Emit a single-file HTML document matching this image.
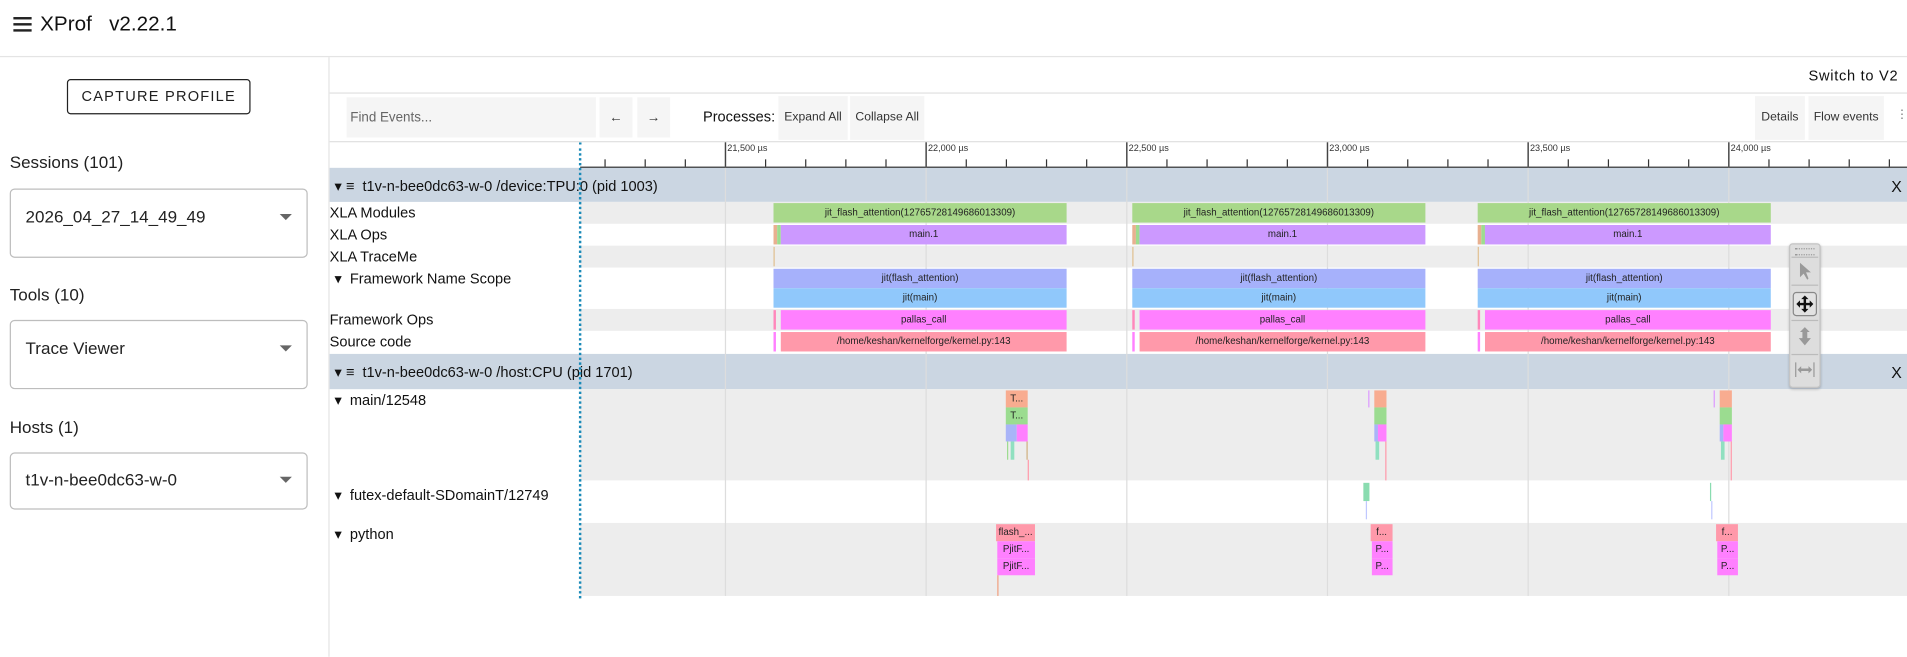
<!DOCTYPE html>
<html><head><meta charset="utf-8"><style>
html,body{margin:0;padding:0;width:1907px;height:657px;overflow:hidden;background:#fff}
#s{position:absolute;left:0;top:0;width:1568px;height:540px;transform:scale(1.21620);transform-origin:0 0;font-family:"Liberation Sans",Arial,sans-serif;color:#202020}
.a{position:absolute}
.t{font-size:12px;white-space:nowrap}
.bar{position:absolute;font-size:8px;text-align:center;line-height:16px;overflow:hidden;white-space:nowrap;color:#222}
.btn{position:absolute;background:#f5f5f5;font-size:11px;line-height:34px;text-align:center;color:#333}
.sel{position:absolute;left:8px;width:243px;border:1px solid #bdbdbd;border-radius:4px;font-size:14px;color:#222}
.sel span{position:absolute;left:12px;top:14px}
.sel i{position:absolute;right:12px;top:20px;border-left:5px solid transparent;border-right:5px solid transparent;border-top:5px solid #666}
.grid{position:absolute;width:1px;background:#ddd}
.lbl{position:absolute;font-size:12px;white-space:nowrap;color:#111}
</style></head><body><div id="s">
<div class="a" style="left:11px;top:14px;width:15px;height:2px;background:#222"></div>
<div class="a" style="left:11px;top:19px;width:15px;height:2px;background:#222"></div>
<div class="a" style="left:11px;top:24px;width:15px;height:2px;background:#222"></div>
<div class="a" style="left:33px;top:10px;font-size:17px;color:#111">XProf&nbsp;&nbsp; v2.22.1</div>
<div class="a" style="left:0;top:46px;width:1568px;height:1px;background:#e4e4e4"></div>
<div class="a" style="left:270px;top:47px;width:1px;height:493px;background:#e4e4e4"></div>
<div class="a" style="left:55px;top:65px;width:149px;height:27px;border:1px solid #222;border-radius:3px;font-size:12px;letter-spacing:1px;text-align:center;line-height:27px">CAPTURE PROFILE</div>
<div class="a" style="left:8px;top:125px;font-size:14px">Sessions (101)</div>
<div class="sel" style="top:155px;height:55px"><span>2026_04_27_14_49_49</span><i></i></div>
<div class="a" style="left:8px;top:234px;font-size:14px">Tools (10)</div>
<div class="sel" style="top:263px;height:55px"><span>Trace Viewer</span><i></i></div>
<div class="a" style="left:8px;top:343px;font-size:14px">Hosts (1)</div>
<div class="sel" style="top:372px;height:45px"><span style="top:13px">t1v-n-bee0dc63-w-0</span><i style="top:19px"></i></div>
<div class="a" style="left:1487px;top:55px;font-size:12px;letter-spacing:.6px;color:#111">Switch to V2</div>
<div class="a" style="left:271px;top:76px;width:1297px;height:1px;background:#e0e0e0"></div>
<div class="a" style="left:285px;top:80px;width:205px;height:33px;background:#f5f5f5"></div>
<div class="a" style="left:288px;top:91px;font-size:11px;color:#666">Find Events...</div>
<div class="btn" style="left:493px;top:80px;width:27px;height:33px">←</div>
<div class="btn" style="left:524px;top:80px;width:27px;height:33px">→</div>
<div class="a" style="left:578px;top:89px;font-size:12px;color:#111">Processes:</div>
<div class="btn" style="left:640px;top:79px;width:57px;height:36px;line-height:36px;font-size:10px">Expand All</div>
<div class="btn" style="left:699px;top:79px;width:61px;height:36px;line-height:36px;font-size:10px">Collapse All</div>
<div class="btn" style="left:1443px;top:79px;width:41px;height:36px;line-height:36px;font-size:10px">Details</div>
<div class="btn" style="left:1487px;top:79px;width:62px;height:36px;line-height:36px;font-size:10px">Flow events</div>
<div class="a" style="left:1559px;top:89px;font-size:10px;color:#777">⋮</div>
<div class="a" style="left:271px;top:116px;width:1297px;height:1px;background:#e0e0e0"></div>
<svg class="a" style="left:0;top:0" width="1568" height="540">
<line x1="477" y1="137.5" x2="1568" y2="137.5" stroke="#222" stroke-width="1"/>
<g stroke="#333" stroke-width="1">
<line x1="497.5" y1="131" x2="497.5" y2="137"/><line x1="530.5" y1="131" x2="530.5" y2="137"/><line x1="563.5" y1="131" x2="563.5" y2="137"/>
<line x1="629.5" y1="131" x2="629.5" y2="137"/><line x1="662.5" y1="131" x2="662.5" y2="137"/><line x1="695.5" y1="131" x2="695.5" y2="137"/><line x1="728.5" y1="131" x2="728.5" y2="137"/>
<line x1="794.5" y1="131" x2="794.5" y2="137"/><line x1="827.5" y1="131" x2="827.5" y2="137"/><line x1="860.5" y1="131" x2="860.5" y2="137"/><line x1="893.5" y1="131" x2="893.5" y2="137"/>
<line x1="959.5" y1="131" x2="959.5" y2="137"/><line x1="992.5" y1="131" x2="992.5" y2="137"/><line x1="1025.5" y1="131" x2="1025.5" y2="137"/><line x1="1058.5" y1="131" x2="1058.5" y2="137"/>
<line x1="1124.5" y1="131" x2="1124.5" y2="137"/><line x1="1157.5" y1="131" x2="1157.5" y2="137"/><line x1="1190.5" y1="131" x2="1190.5" y2="137"/><line x1="1223.5" y1="131" x2="1223.5" y2="137"/>
<line x1="1289.5" y1="131" x2="1289.5" y2="137"/><line x1="1322.5" y1="131" x2="1322.5" y2="137"/><line x1="1355.5" y1="131" x2="1355.5" y2="137"/><line x1="1388.5" y1="131" x2="1388.5" y2="137"/>
<line x1="1454.5" y1="131" x2="1454.5" y2="137"/><line x1="1487.5" y1="131" x2="1487.5" y2="137"/><line x1="1520.5" y1="131" x2="1520.5" y2="137"/><line x1="1553.5" y1="131" x2="1553.5" y2="137"/>
</g>
<g stroke="#444" stroke-width="1.2">
<line x1="596.5" y1="117" x2="596.5" y2="137"/><line x1="761.5" y1="117" x2="761.5" y2="137"/><line x1="926.5" y1="117" x2="926.5" y2="137"/><line x1="1091.5" y1="117" x2="1091.5" y2="137"/><line x1="1256.5" y1="117" x2="1256.5" y2="137"/><line x1="1421.5" y1="117" x2="1421.5" y2="137"/>
</g>
<g font-family="Liberation Sans, Arial, sans-serif" font-size="7.5" fill="#333">
<text x="598" y="124">21,500 µs</text><text x="763" y="124">22,000 µs</text><text x="928" y="124">22,500 µs</text><text x="1093" y="124">23,000 µs</text><text x="1258" y="124">23,500 µs</text><text x="1423" y="124">24,000 µs</text>
</g>
</svg>
<div class="a" style="left:271px;top:138px;width:1297px;height:28px;background:#cbd6e2"></div>
<div class="lbl" style="left:275px;top:146px">▾ ≡&nbsp; t1v-n-bee0dc63-w-0 /device:TPU:0 (pid 1003)</div>
<div class="lbl" style="left:1555px;top:146px;font-size:13px">X</div>
<div class="a" style="left:477px;top:166px;width:1091px;height:18px;background:#ededed"></div>
<div class="a" style="left:477px;top:202px;width:1091px;height:18px;background:#ededed"></div>
<div class="a" style="left:477px;top:254px;width:1091px;height:18px;background:#ededed"></div>
<div class="lbl" style="left:271px;top:168px">XLA Modules</div>
<div class="lbl" style="left:271px;top:186px">XLA Ops</div>
<div class="lbl" style="left:271px;top:204px">XLA TraceMe</div>
<div class="lbl" style="left:275px;top:222px">▾&nbsp; Framework Name Scope</div>
<div class="lbl" style="left:271px;top:256px">Framework Ops</div>
<div class="lbl" style="left:271px;top:274px">Source code</div>
<div class="a" style="left:271px;top:291px;width:1297px;height:29px;background:#cbd6e2"></div>
<div class="lbl" style="left:275px;top:299px">▾ ≡&nbsp; t1v-n-bee0dc63-w-0 /host:CPU (pid 1701)</div>
<div class="lbl" style="left:1555px;top:299px;font-size:13px">X</div>
<div class="a" style="left:477px;top:320px;width:1091px;height:75px;background:#ededed"></div>
<div class="a" style="left:477px;top:430px;width:1091px;height:60px;background:#ededed"></div>
<div class="lbl" style="left:275px;top:322px">▾&nbsp; main/12548</div>
<div class="lbl" style="left:275px;top:400px">▾&nbsp; futex-default-SDomainT/12749</div>
<div class="lbl" style="left:275px;top:432px">▾&nbsp; python</div>
<div class="grid" style="left:596px;top:138px;height:352px"></div>
<div class="grid" style="left:761px;top:138px;height:352px"></div>
<div class="grid" style="left:926px;top:138px;height:352px"></div>
<div class="grid" style="left:1091px;top:138px;height:352px"></div>
<div class="grid" style="left:1256px;top:138px;height:352px"></div>
<div class="grid" style="left:1421px;top:138px;height:352px"></div>
<div class="bar" style="left:636px;top:167px;width:241px;height:16px;background:#a8d88a">jit_flash_attention(12765728149686013309)</div>
<div class="bar" style="left:636px;top:185px;width:3px;height:16px;background:#e8b090"></div>
<div class="bar" style="left:639px;top:185px;width:3px;height:16px;background:#9ddc90"></div>
<div class="bar" style="left:642px;top:185px;width:235px;height:16px;background:#cc99ff">main.1</div>
<div class="bar" style="left:636px;top:203px;width:1px;height:16px;background:#e0c090"></div>
<div class="bar" style="left:636px;top:221px;width:241px;height:16px;background:#a6b1fb">jit(flash_attention)</div>
<div class="bar" style="left:636px;top:237px;width:241px;height:16px;background:#90c8fb">jit(main)</div>
<div class="bar" style="left:636px;top:255px;width:2px;height:16px;background:#ff88bb"></div>
<div class="bar" style="left:642px;top:255px;width:235px;height:16px;background:#ff80ff">pallas_call</div>
<div class="bar" style="left:636px;top:273px;width:2px;height:16px;background:#ff80ff"></div>
<div class="bar" style="left:642px;top:273px;width:235px;height:16px;background:#ff99aa">/home/keshan/kernelforge/kernel.py:143</div>
<div class="bar" style="left:931px;top:167px;width:241px;height:16px;background:#a8d88a">jit_flash_attention(12765728149686013309)</div>
<div class="bar" style="left:931px;top:185px;width:3px;height:16px;background:#e8b090"></div>
<div class="bar" style="left:934px;top:185px;width:3px;height:16px;background:#9ddc90"></div>
<div class="bar" style="left:937px;top:185px;width:235px;height:16px;background:#cc99ff">main.1</div>
<div class="bar" style="left:931px;top:203px;width:1px;height:16px;background:#e0c090"></div>
<div class="bar" style="left:931px;top:221px;width:241px;height:16px;background:#a6b1fb">jit(flash_attention)</div>
<div class="bar" style="left:931px;top:237px;width:241px;height:16px;background:#90c8fb">jit(main)</div>
<div class="bar" style="left:931px;top:255px;width:2px;height:16px;background:#ff88bb"></div>
<div class="bar" style="left:937px;top:255px;width:235px;height:16px;background:#ff80ff">pallas_call</div>
<div class="bar" style="left:931px;top:273px;width:2px;height:16px;background:#ff80ff"></div>
<div class="bar" style="left:937px;top:273px;width:235px;height:16px;background:#ff99aa">/home/keshan/kernelforge/kernel.py:143</div>
<div class="bar" style="left:1215px;top:167px;width:241px;height:16px;background:#a8d88a">jit_flash_attention(12765728149686013309)</div>
<div class="bar" style="left:1215px;top:185px;width:3px;height:16px;background:#e8b090"></div>
<div class="bar" style="left:1218px;top:185px;width:3px;height:16px;background:#9ddc90"></div>
<div class="bar" style="left:1221px;top:185px;width:235px;height:16px;background:#cc99ff">main.1</div>
<div class="bar" style="left:1215px;top:203px;width:1px;height:16px;background:#e0c090"></div>
<div class="bar" style="left:1215px;top:221px;width:241px;height:16px;background:#a6b1fb">jit(flash_attention)</div>
<div class="bar" style="left:1215px;top:237px;width:241px;height:16px;background:#90c8fb">jit(main)</div>
<div class="bar" style="left:1215px;top:255px;width:2px;height:16px;background:#ff88bb"></div>
<div class="bar" style="left:1221px;top:255px;width:235px;height:16px;background:#ff80ff">pallas_call</div>
<div class="bar" style="left:1215px;top:273px;width:2px;height:16px;background:#ff80ff"></div>
<div class="bar" style="left:1221px;top:273px;width:235px;height:16px;background:#ff99aa">/home/keshan/kernelforge/kernel.py:143</div>
<div class="bar" style="left:827px;top:321px;width:18px;height:14px;line-height:14px;background:#f8ac90">T...</div>
<div class="bar" style="left:827px;top:335px;width:18px;height:14px;line-height:14px;background:#9bdc90">T...</div>
<div class="bar" style="left:827px;top:349px;width:9px;height:14px;background:#a9b4f8"></div>
<div class="bar" style="left:836px;top:349px;width:9px;height:14px;background:#ff80ff"></div>
<div class="bar" style="left:828px;top:363px;width:1px;height:15px;background:#9ddc90"></div>
<div class="bar" style="left:831px;top:363px;width:3px;height:15px;background:#90e0c0"></div>
<div class="bar" style="left:844px;top:363px;width:1px;height:15px;background:#d0b080"></div>
<div class="bar" style="left:845px;top:378px;width:1px;height:17px;background:#ff99aa"></div>
<div class="bar" style="left:1125px;top:321px;width:1px;height:14px;background:#dd99ff"></div>
<div class="bar" style="left:1130px;top:321px;width:10px;height:14px;background:#f8ac90"></div>
<div class="bar" style="left:1130px;top:335px;width:10px;height:14px;background:#9bdc90"></div>
<div class="bar" style="left:1130px;top:349px;width:3px;height:14px;background:#a9b4f8"></div>
<div class="bar" style="left:1133px;top:349px;width:7px;height:14px;background:#ff80ff"></div>
<div class="bar" style="left:1131px;top:363px;width:3px;height:15px;background:#90e0c0"></div>
<div class="bar" style="left:1139px;top:363px;width:1px;height:32px;background:#ff99aa"></div>
<div class="bar" style="left:1409px;top:321px;width:1px;height:14px;background:#dd99ff"></div>
<div class="bar" style="left:1414px;top:321px;width:10px;height:14px;background:#f8ac90"></div>
<div class="bar" style="left:1414px;top:335px;width:10px;height:14px;background:#9bdc90"></div>
<div class="bar" style="left:1414px;top:349px;width:3px;height:14px;background:#a9b4f8"></div>
<div class="bar" style="left:1417px;top:349px;width:7px;height:14px;background:#ff80ff"></div>
<div class="bar" style="left:1415px;top:363px;width:3px;height:15px;background:#90e0c0"></div>
<div class="bar" style="left:1423px;top:363px;width:1px;height:32px;background:#ff99aa"></div>
<div class="bar" style="left:1121px;top:397px;width:5px;height:15px;background:#8adcb0"></div>
<div class="bar" style="left:1123px;top:412px;width:1px;height:15px;background:#c0c8ff"></div>
<div class="bar" style="left:1406px;top:397px;width:1px;height:15px;background:#8adcb0"></div>
<div class="bar" style="left:1407px;top:412px;width:1px;height:15px;background:#c0c8ff"></div>
<div class="bar" style="left:819px;top:431px;width:32px;height:14px;line-height:14px;background:#ff99aa">flash_...</div>
<div class="bar" style="left:820px;top:445px;width:31px;height:14px;line-height:14px;background:#ff80ff">PjitF...</div>
<div class="bar" style="left:820px;top:459px;width:31px;height:14px;line-height:14px;background:#ff80ff">PjitF...</div>
<div class="bar" style="left:820px;top:473px;width:1px;height:17px;background:#f0a080"></div>
<div class="bar" style="left:1127px;top:431px;width:18px;height:14px;line-height:14px;background:#ff99aa">f...</div>
<div class="bar" style="left:1128px;top:445px;width:17px;height:14px;line-height:14px;background:#ff80ff">P...</div>
<div class="bar" style="left:1128px;top:459px;width:17px;height:14px;line-height:14px;background:#ff80ff">P...</div>
<div class="bar" style="left:1411px;top:431px;width:18px;height:14px;line-height:14px;background:#ff99aa">f...</div>
<div class="bar" style="left:1412px;top:445px;width:17px;height:14px;line-height:14px;background:#ff80ff">P...</div>
<div class="bar" style="left:1412px;top:459px;width:17px;height:14px;line-height:14px;background:#ff80ff">P...</div>
<div class="a" style="left:476px;top:117px;width:0;height:375px;border-left:2px dotted #1a8ab8"></div>
<div class="a" style="left:1471px;top:200px;width:24px;height:117px;background:#ddd;border:1px solid #c4c4c4;border-radius:3px;box-shadow:0 1px 2px rgba(0,0,0,.2)">
<div class="a" style="left:4px;top:3px;width:16px;height:4px;border-top:1px dotted #999;border-bottom:1px dotted #999"></div>
<div class="a" style="left:1px;top:10px;width:22px;height:1px;background:#bbb"></div>
<svg class="a" style="left:5px;top:14px" width="14" height="16"><path d="M3 1 L3 13 L6 10 L9 15 L10 14 L8 9 L12 9 Z" fill="#999"/></svg>
<div class="a" style="left:1px;top:33px;width:22px;height:1px;background:#bbb"></div>
<div class="a" style="left:2px;top:39px;width:18px;height:18px;border:1px solid #888;border-radius:3px;background:#e2e2e2"></div>
<svg class="a" style="left:3px;top:40px" width="18" height="18"><path d="M9 2 L12 5 L10 5 L10 8 L13 8 L13 6 L16 9 L13 12 L13 10 L10 10 L10 13 L12 13 L9 16 L6 13 L8 13 L8 10 L5 10 L5 12 L2 9 L5 6 L5 8 L8 8 L8 5 L6 5 Z" fill="#111"/></svg>
<div class="a" style="left:1px;top:62px;width:22px;height:1px;background:#bbb"></div>
<svg class="a" style="left:5px;top:67px" width="14" height="18"><path d="M7 1 L11 5 L9 5 L9 10 L12 10 L7 16 L2 10 L5 10 L5 5 L3 5 Z" fill="#999"/></svg>
<div class="a" style="left:1px;top:90px;width:22px;height:1px;background:#bbb"></div>
<svg class="a" style="left:3px;top:96px" width="18" height="14"><path d="M1.5 1 V13 M16.5 1 V13" stroke="#999" stroke-width="1"/><path d="M3 7 L6 4 L6 6 L12 6 L12 4 L15 7 L12 10 L12 8 L6 8 L6 10 Z" fill="#999"/></svg>
</div>
</div></body></html>
